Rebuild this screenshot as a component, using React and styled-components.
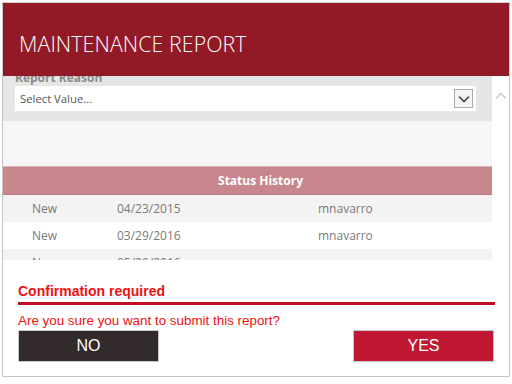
import React from "react";
import styled, { createGlobalStyle } from "styled-components";

const GlobalStyle = createGlobalStyle`
  html, body {
    margin: 0;
    padding: 0;
    background: #ffffff;
  }
  body {
    font-family: "Open Sans", "Liberation Sans", sans-serif;
  }
  * {
    box-sizing: border-box;
  }
`;

const history = [
  { status: "New", date: "04/23/2015", user: "mnavarro" },
  { status: "New", date: "03/29/2016", user: "mnavarro" },
  { status: "New", date: "05/20/2016", user: "mnavarro" },
];

export default function App() {
  return (
    <>
      <GlobalStyle />
      <Page>
        <Frame>
          <Header>
            <h1>MAINTENANCE REPORT</h1>
          </Header>
          <Body>
            <Scroller>
              <ScrollInner>
                <ReasonSection>
                  <Label>Report Reason</Label>
                  <Select>
                    <span>Select Value...</span>
                    <DropButton>
                      <svg width="12" height="8" viewBox="0 0 12 8">
                        <path
                          d="M1 1.5 L6 6.5 L11 1.5"
                          fill="none"
                          stroke="#444"
                          strokeWidth="1.6"
                        />
                      </svg>
                    </DropButton>
                  </Select>
                </ReasonSection>
                <Spacer />
                <TableHeader>Status History</TableHeader>
                {history.map((row, i) => (
                  <Row key={i} $alt={i % 2 === 0}>
                    <StatusCell>{row.status}</StatusCell>
                    <DateCell>{row.date}</DateCell>
                    <UserCell>{row.user}</UserCell>
                  </Row>
                ))}
              </ScrollInner>
            </Scroller>
            <ScrollBar>
              <svg width="12" height="8" viewBox="0 0 12 8">
                <path
                  d="M1 6.5 L6 1.5 L11 6.5"
                  fill="none"
                  stroke="#cfcfcf"
                  strokeWidth="1.6"
                />
              </svg>
            </ScrollBar>
          </Body>
          <Confirm>
            <ConfirmTitle>Confirmation required</ConfirmTitle>
            <Question>Are you sure you want to submit this report?</Question>
            <Buttons>
              <Button $variant="no">NO</Button>
              <Button $variant="yes">YES</Button>
            </Buttons>
          </Confirm>
        </Frame>
      </Page>
    </>
  );
}

const Page = styled.div`
  width: 512px;
  height: 384px;
  padding: 2px 2px 0 2px;
`;

const Frame = styled.div`
  width: 508px;
  height: 375px;
  border: 1px solid #c6c6c6;
  border-top-color: #d0d0d0;
  display: flex;
  flex-direction: column;
  background: #ffffff;
  overflow: hidden;
`;

const Header = styled.div`
  height: 73px;
  background: #921a26;
  display: flex;
  align-items: center;
  padding: 8px 0 0 16px;

  h1 {
    margin: 0;
    color: #ffffff;
    font-family: "Open Sans", "Liberation Sans", sans-serif;
    font-weight: 300;
    font-size: 21.3px;
    letter-spacing: 0.1px;
  }
`;

const Body = styled.div`
  display: flex;
  height: 184px;
`;

const Scroller = styled.div`
  width: 489px;
  height: 184px;
  overflow: hidden;
`;

const ScrollInner = styled.div`
  margin-top: -6px;
`;

const ScrollBar = styled.div`
  flex: 1;
  display: flex;
  justify-content: center;
  padding-top: 16px;
`;

const ReasonSection = styled.div`
  background: #e6e6e6;
  padding: 0 16px 10px 12px;
`;

const Label = styled.div`
  font-size: 12px;
  font-weight: 700;
  color: #8a8a8a;
  line-height: 16px;
`;

const Select = styled.div`
  height: 25px;
  background: #ffffff;
  display: flex;
  align-items: center;
  justify-content: space-between;
  padding: 0 3px 0 5px;

  span {
    font-size: 11.3px;
    color: #555555;
  }
`;

const DropButton = styled.div`
  width: 19px;
  height: 19px;
  border: 1px solid #a9a9a9;
  background: #f5f5f5;
  display: flex;
  align-items: center;
  justify-content: center;
`;

const Spacer = styled.div`
  height: 45px;
  background: #f6f6f6;
`;

const TableHeader = styled.div`
  height: 29px;
  background: #c8878c;
  border-top: 1px solid #d8b5b8;
  border-bottom: 1px solid #b97a80;
  color: #ffffff;
  font-size: 12px;
  font-weight: 700;
  display: flex;
  align-items: center;
  justify-content: center;
  padding-left: 26px;
`;

const Row = styled.div`
  height: 27px;
  display: flex;
  align-items: center;
  background: ${(p) => (p.$alt ? "#f3f3f3" : "#ffffff")};
  font-size: 12px;
  color: #7a7a7a;
`;

const StatusCell = styled.div`
  width: 114px;
  padding-left: 29px;
`;

const DateCell = styled.div`
  width: 201px;
`;

const UserCell = styled.div`
  flex: 1;
`;

const Confirm = styled.div`
  flex: 1;
  padding: 23px 15px 0 15px;
  font-family: "Liberation Sans", Arial, sans-serif;
`;

const ConfirmTitle = styled.div`
  color: #ee1111;
  font-size: 14px;
  font-weight: 700;
  line-height: 16px;
  padding-bottom: 3px;
  border-bottom: 3px solid #c00d22;
  width: 477px;
`;

const Question = styled.div`
  color: #ee1111;
  font-size: 13.4px;
  margin-top: 8px;
  line-height: 15px;
`;

const Buttons = styled.div`
  display: flex;
  justify-content: space-between;
  width: 476px;
  margin-top: 2px;
`;

const Button = styled.button`
  width: 141px;
  height: 32px;
  border: 1px solid #c8c8c8;
  background: ${(p) => (p.$variant === "yes" ? "#c01832" : "#332b2b")};
  color: #ffffff;
  font-family: "Liberation Sans", Arial, sans-serif;
  font-size: 16px;
  padding: 0;
`;
